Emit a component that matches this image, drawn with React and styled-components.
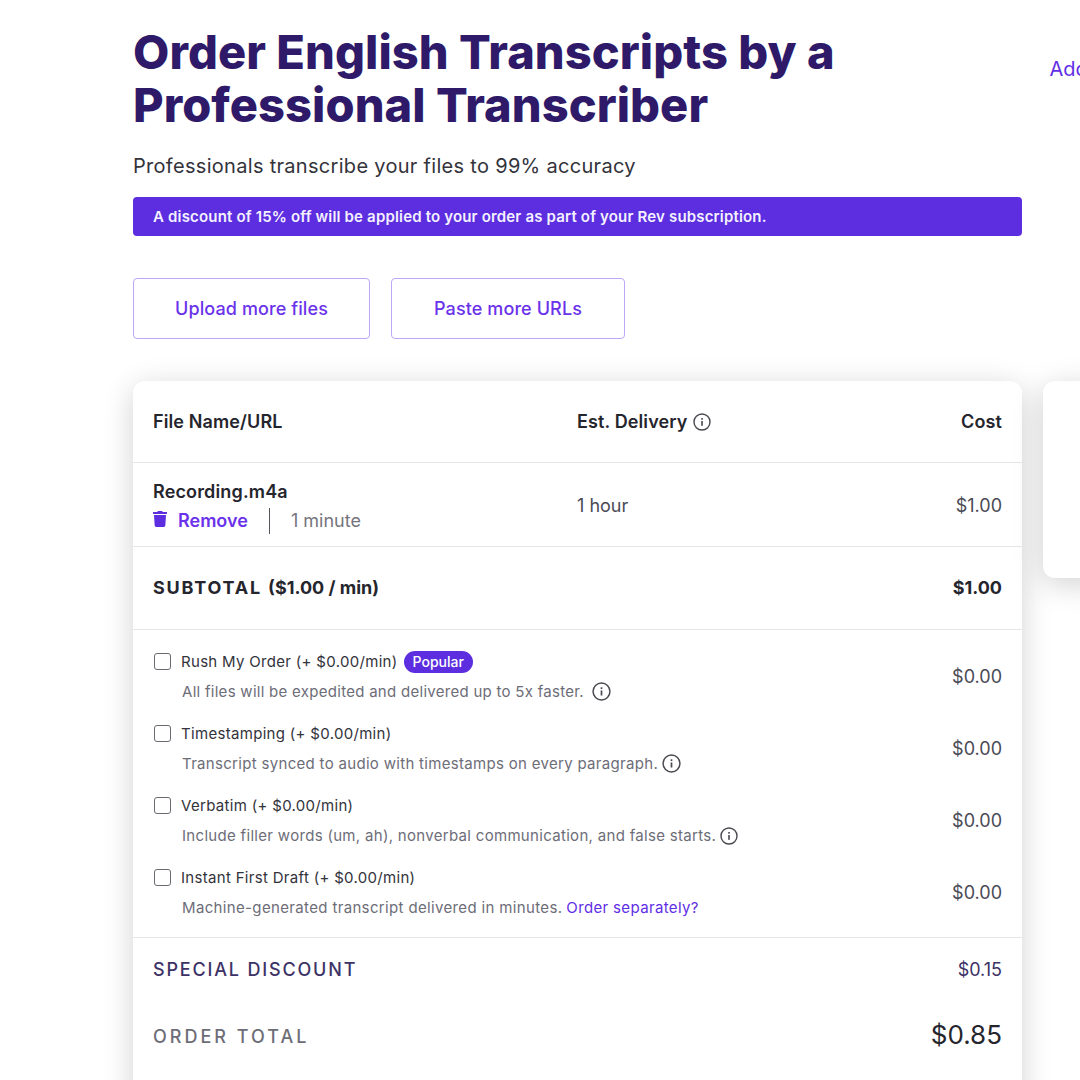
import React from "react";
import styled, { createGlobalStyle } from "styled-components";
import { FaTrash } from "react-icons/fa";

const GlobalStyle = createGlobalStyle`
  html, body {
    margin: 0;
    padding: 0;
    width: 1080px;
    height: 1080px;
    overflow: hidden;
    background: #fff;
    font-family: Inter, "Liberation Sans", sans-serif;
  }
  * { box-sizing: border-box; }
`;

const InfoIcon = ({ size = 18, color = "#4a4a50" }) => (
  <InfoSvg width={size} height={size} viewBox="0 0 18 18" fill="none">
    <circle cx="9" cy="9" r="8" stroke={color} strokeWidth="1.4" />
    <rect x="8.2" y="8" width="1.6" height="4.8" fill={color} />
    <rect x="8.2" y="5" width="1.6" height="1.7" fill={color} />
  </InfoSvg>
);

const options = [
  {
    name: "Rush My Order (+ $0.00/min)",
    popular: true,
    desc: "All files will be expedited and delivered up to 5x faster.",
    info: 19,
    gap: 8,
    spacing: 0.28,
  },
  {
    name: "Timestamping (+ $0.00/min)",
    desc: "Transcript synced to audio with timestamps on every paragraph.",
    info: 19,
    gap: 4,
    spacing: 0.31,
  },
  {
    name: "Verbatim (+ $0.00/min)",
    desc: "Include filler words (um, ah), nonverbal communication, and false starts.",
    info: 18,
    gap: 4,
    spacing: 0.31,
  },
  {
    name: "Instant First Draft (+ $0.00/min)",
    desc: "Machine-generated transcript delivered in minutes.",
    link: "Order separately?",
    gap: 4,
    spacing: 0.35,
  },
];

export default function App() {
  return (
    <Page>
      <GlobalStyle />
      <Layout>
        <Main>
          <Title>Order English Transcripts by a Professional Transcriber</Title>
          <Subtitle>Professionals transcribe your files to 99% accuracy</Subtitle>
          <Banner>A discount of 15% off will be applied to your order as part of your Rev subscription.</Banner>
          <Buttons>
            <OutlineButton $width={237}>Upload more files</OutlineButton>
            <OutlineButton $width={234}>Paste more URLs</OutlineButton>
          </Buttons>
          <Card>
            <HeaderRow>
              <NameCol><HeadLabel>File Name/URL</HeadLabel></NameCol>
              <DeliveryCol>
                <HeadLabel>Est. Delivery</HeadLabel>
                <InfoIcon size={18} />
              </DeliveryCol>
              <CostCol><HeadLabel>Cost</HeadLabel></CostCol>
            </HeaderRow>
            <FileRow>
              <NameCol>
                <FileName>Recording.m4a</FileName>
                <FileMeta>
                  <TrashIcon />
                  <RemoveLink>Remove</RemoveLink>
                  <Duration>1 minute</Duration>
                </FileMeta>
              </NameCol>
              <DeliveryCol><Muted>1 hour</Muted></DeliveryCol>
              <CostCol><Muted>$1.00</Muted></CostCol>
            </FileRow>
            <SubtotalRow>
              <SubtotalLabel>SUBTOTAL <span>($1.00 / min)</span></SubtotalLabel>
              <SubtotalValue>$1.00</SubtotalValue>
            </SubtotalRow>
            <OptionList>
              {options.map((o) => (
                <OptionRow key={o.name}>
                  <OptionBody>
                    <OptionTitle>
                      <Check />
                      <OptionName>{o.name}</OptionName>
                      {o.popular && <Badge>Popular</Badge>}
                    </OptionTitle>
                    <OptionDesc $gap={o.gap} $spacing={o.spacing}>
                      {o.desc}
                      {o.info && <InfoIcon size={o.info} />}
                      {o.link && <OptionLink>{o.link}</OptionLink>}
                    </OptionDesc>
                  </OptionBody>
                  <OptionPrice>$0.00</OptionPrice>
                </OptionRow>
              ))}
            </OptionList>
            <DiscountRow>
              <DiscountLabel>SPECIAL DISCOUNT</DiscountLabel>
              <DiscountValue>$0.15</DiscountValue>
            </DiscountRow>
            <TotalRow>
              <TotalLabel>ORDER TOTAL</TotalLabel>
              <TotalValue>$0.85</TotalValue>
            </TotalRow>
          </Card>
        </Main>
        <Side>
          <AddLink>Add</AddLink>
          <SideCard />
        </Side>
      </Layout>
    </Page>
  );
}

const Page = styled.div`
  width: 1080px;
  height: 1080px;
  overflow: hidden;
  background: #fff;
  padding: 25px 0 0 133px;
`;

const Layout = styled.div`
  display: flex;
  gap: 21px;
  width: 1400px;
`;

const Main = styled.div`
  width: 889px;
  flex-shrink: 0;
`;

const Side = styled.div`
  width: 300px;
  flex-shrink: 0;
`;

const AddLink = styled.a`
  display: block;
  margin: 32px 0 0 6.5px;
  font-size: 20px;
  line-height: 24px;
  color: #5f2ee5;
`;

const SideCard = styled.div`
  margin-top: 300px;
  height: 197px;
  background: #fff;
  border-radius: 12px;
  box-shadow: 0 6px 30px rgba(0, 0, 0, 0.18);
`;

const Title = styled.h1`
  margin: 0;
  width: 760px;
  font-size: 47px;
  line-height: 53px;
  font-weight: 800;
  letter-spacing: 0.06px;
  color: #2e1a69;
`;

const Subtitle = styled.p`
  margin: 21px 0 0;
  font-size: 20px;
  line-height: 28px;
  letter-spacing: 0.3px;
  color: #33333b;
`;

const Banner = styled.div`
  margin-top: 17px;
  height: 39px;
  display: flex;
  align-items: center;
  padding: 0 20px;
  background: #5c2ee0;
  border-radius: 4px;
  color: #f4f1ff;
  font-size: 15px;
  letter-spacing: 0.17px;
  font-weight: 600;
`;

const Buttons = styled.div`
  display: flex;
  gap: 21px;
  margin-top: 42px;
`;

const OutlineButton = styled.button`
  width: ${(p) => p.$width}px;
  height: 61px;
  background: #fff;
  border: 1px solid #bfa6f6;
  border-radius: 4px;
  color: #6a32ea;
  font-family: inherit;
  font-size: 18px;
  font-weight: 500;
  letter-spacing: 0.1px;
`;

const Card = styled.div`
  margin-top: 42px;
  padding-bottom: 40px;
  background: #fff;
  border-radius: 12px;
  box-shadow: 0 6px 30px rgba(0, 0, 0, 0.18);
`;

const Row = styled.div`
  display: flex;
  align-items: center;
  padding: 0 20px;
`;

const HeaderRow = styled(Row)`
  height: 82px;
  border-bottom: 1px solid #e6e6ea;
`;

const NameCol = styled.div`
  width: 424px;
`;

const DeliveryCol = styled.div`
  display: flex;
  align-items: center;
  gap: 5px;
`;

const CostCol = styled.div`
  margin-left: auto;
`;

const HeadLabel = styled.span`
  font-size: 18px;
  font-weight: 600;
  letter-spacing: 0.12px;
  color: #25252d;
`;

const InfoSvg = styled.svg`
  flex-shrink: 0;
  vertical-align: middle;
`;

const FileRow = styled(Row)`
  height: 84px;
  padding-top: 2px;
  border-bottom: 1px solid #e6e6ea;
  ${NameCol} {
    padding-top: 3px;
  }
`;

const FileName = styled.div`
  font-size: 18px;
  line-height: 22px;
  font-weight: 600;
  letter-spacing: 0.15px;
  color: #25252d;
`;

const FileMeta = styled.div`
  display: flex;
  align-items: center;
  margin-top: 5px;
`;

const TrashIcon = styled(FaTrash)`
  width: 14px;
  height: 16px;
  margin-bottom: 4px;
  color: #5c2ee0;
`;

const RemoveLink = styled.a`
  margin-left: 11px;
  padding-right: 21px;
  border-right: 1px solid #55555d;
  font-size: 18px;
  line-height: 26px;
  font-weight: 600;
  color: #6a32ea;
`;

const Duration = styled.span`
  margin-left: 21px;
  font-size: 18px;
  color: #75757d;
`;

const Muted = styled.span`
  font-size: 18px;
  color: #4a4a55;
`;

const SubtotalRow = styled(Row)`
  height: 83px;
  padding-bottom: 2px;
  justify-content: space-between;
  border-bottom: 1px solid #e6e6ea;
`;

const SubtotalLabel = styled.div`
  font-size: 18px;
  font-weight: 700;
  letter-spacing: 1.8px;
  color: #25252d;
  span {
    letter-spacing: 0;
  }
`;

const SubtotalValue = styled.div`
  font-size: 18px;
  font-weight: 700;
  color: #25252d;
`;

const OptionList = styled.div`
  padding: 10px 0 9px;
  border-bottom: 1px solid #e6e6ea;
`;

const OptionRow = styled(Row)`
  height: 72px;
  justify-content: space-between;
`;

const OptionBody = styled.div`
  display: flex;
  flex-direction: column;
  gap: 9px;
`;

const OptionTitle = styled.div`
  display: flex;
  align-items: center;
  height: 22px;
`;

const Check = styled.span`
  width: 17px;
  height: 17px;
  margin-left: 1px;
  border: 1.5px solid #6a6a72;
  border-radius: 3px;
  background: #fff;
`;

const OptionName = styled.span`
  margin-left: 10px;
  font-size: 15px;
  letter-spacing: 0.31px;
  color: #33333b;
`;

const Badge = styled.span`
  margin-left: 6px;
  height: 22px;
  padding: 0 9px;
  display: flex;
  align-items: center;
  border-radius: 11px;
  background: #5c2ee0;
  color: #fff;
  font-size: 14px;
  font-weight: 500;
`;

const OptionDesc = styled.div`
  display: flex;
  align-items: center;
  gap: ${(p) => p.$gap}px;
  height: 20px;
  margin-left: 29px;
  font-size: 15px;
  letter-spacing: ${(p) => p.$spacing}px;
  color: #6d6d78;
`;

const OptionLink = styled.a`
  color: #5f2ee5;
`;

const OptionPrice = styled.div`
  font-size: 18px;
  color: #4a4a55;
`;

const DiscountRow = styled(Row)`
  height: 62px;
  justify-content: space-between;
`;

const DiscountLabel = styled.div`
  font-size: 18px;
  font-weight: 500;
  letter-spacing: 1.82px;
  color: #3d3266;
`;

const DiscountValue = styled.div`
  font-size: 18px;
  color: #3d3266;
`;

const TotalRow = styled(Row)`
  height: 72px;
  justify-content: space-between;
`;

const TotalLabel = styled.div`
  font-size: 18px;
  font-weight: 500;
  letter-spacing: 3px;
  color: #6d6d78;
`;

const TotalValue = styled.div`
  padding-bottom: 3px;
  font-size: 26px;
  color: #25252d;
`;
